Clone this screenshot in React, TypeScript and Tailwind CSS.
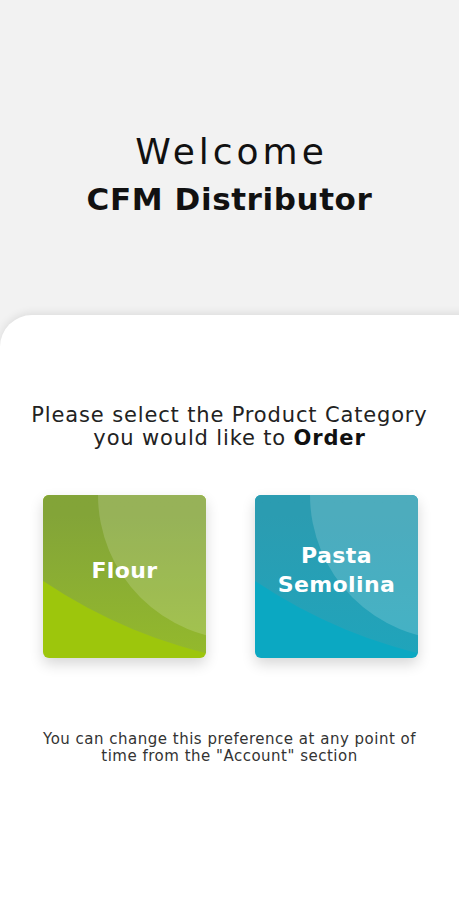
import React from "react";

function Card({ label, variant }: { label: React.ReactNode; variant: "flour" | "pasta" }) {
  const flour = variant === "flour";
  return (
    <div
      className={`relative w-[163px] h-[163px] rounded-[6px] overflow-hidden shadow-[0_6px_14px_rgba(0,0,0,0.16)] ${
        flour ? "bg-[#9dc60c]" : "bg-[#0ba8c2]"
      }`}
    >
      <div
        className={`absolute rounded-full w-[1020px] h-[1020px] left-[-225px] top-[-847px] ${
          flour
            ? "bg-gradient-to-b from-[#7f9f3a] via-[#83a438] via-85% to-[#95bb2a]"
            : "bg-gradient-to-b from-[#2a98ad] via-[#2b9cb1] via-85% to-[#1ea5bc]"
        }`}
      />
      <div className="absolute rounded-full w-[290px] h-[290px] left-[55px] top-[-145px] bg-white/[0.16]" />
      <div className="relative h-full flex items-center justify-center pb-[13px] text-white font-bold text-[22px] leading-[29px] tracking-[0.4px] text-center">
        {label}
      </div>
    </div>
  );
}

export default function App() {
  return (
    <div
      className="w-[459px] h-[900px] bg-[#f2f2f2] flex flex-col overflow-hidden"
      style={{ fontFamily: "'DejaVu Sans', sans-serif" }}
    >
      <div className="h-[315px] flex flex-col items-center pt-[132px] text-[#111]">
        <div className="text-[36px] leading-[40px] font-normal tracking-[4px] pl-[4px]">Welcome</div>
        <div className="mt-[9px] text-[31px] leading-[36px] font-bold tracking-[0.6px]">CFM Distributor</div>
      </div>
      <div className="flex-1 bg-white rounded-tl-[32px] mr-[-20px] shadow-[0_-2px_8px_rgba(0,0,0,0.09)] flex flex-col pr-[20px]">
        <div className="pt-[89px] text-center text-[21px] leading-[23px] tracking-[0.85px] text-[#222]">
          Please select the Product Category
          <br />
          you would like to <span className="font-bold text-[#111]">Order</span>
        </div>
        <div className="mt-[45px] flex justify-between pl-[43px] pr-[41px]">
          <Card label="Flour" variant="flour" />
          <Card label={<>Pasta<br />Semolina</>} variant="pasta" />
        </div>
        <div className="mt-[73px] text-center text-[15px] leading-[17px] tracking-[0.5px] text-[#333]">
          You can change this preference at any point of
          <br />
          time from the "Account" section
        </div>
      </div>
    </div>
  );
}
